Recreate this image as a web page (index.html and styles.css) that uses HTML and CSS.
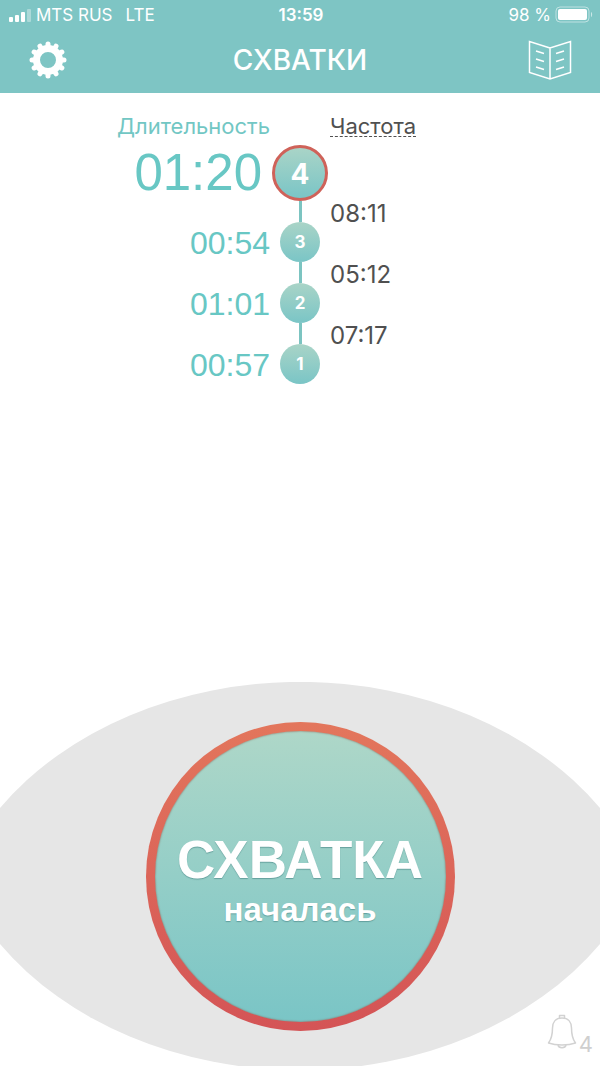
FILE: index.html
```html
<!DOCTYPE html>
<html lang="ru">
<head>
    <meta charset="UTF-8">
    <meta name="viewport" content="width=device-width, initial-scale=1.0">
    <title>Схватки</title>
    <link rel="stylesheet" href="styles.css">
</head>
<body>
    <header class="header">
        <div class="status">
            <div class="status-left">
                <svg class="signal" width="23" height="13" viewBox="0 0 23 13" fill="#fff" aria-hidden="true">
                    <rect x="0" y="8" width="4" height="5" rx="1"/>
                    <rect x="6" y="6" width="4" height="7" rx="1"/>
                    <rect x="12" y="3" width="4" height="10" rx="1"/>
                    <rect x="18" y="0" width="4" height="13" rx="1" opacity="0.35"/>
                </svg>
                <span>MTS RUS</span>
                <span class="network">LTE</span>
            </div>
            <div class="clock">13:59</div>
            <div class="status-right">
                <span>98 %</span>
                <svg width="38" height="18" viewBox="0 0 38 18" aria-hidden="true">
                    <rect x="1" y="1" width="33" height="15" rx="4" fill="none" stroke="#fff" stroke-opacity="0.5"/>
                    <rect x="3" y="3" width="29" height="11" rx="2" fill="#fff"/>
                    <path d="M36 6v5c1.5-.6 1.5-4.400 0-5z" fill="#fff" opacity="0.6"/>
                </svg>
            </div>
        </div>
        <div class="navbar">
            <button class="icon-button" type="button" aria-label="Настройки">
                <svg width="40" height="40" viewBox="-20 -20 40 40" aria-hidden="true">
                    <circle r="11.5" fill="none" stroke="#fff" stroke-width="7"/>
                    <g stroke="#fff" stroke-width="5" stroke-linecap="round">
                        <path d="M0-14v-2M0 14v2M-14 0h-2M14 0h2"/>
                        <path d="M0-14v-2M0 14v2M-14 0h-2M14 0h2" transform="rotate(30)"/>
                        <path d="M0-14v-2M0 14v2M-14 0h-2M14 0h2" transform="rotate(60)"/>
                    </g>
                </svg>
            </button>
            <h1>СХВАТКИ</h1>
            <button class="icon-button" type="button" aria-label="Журнал">
                <svg width="44" height="40" viewBox="0 0 44 40" fill="none" stroke="#fff" stroke-width="1.5" aria-hidden="true">
                    <path d="M22 8L1.5 1.5v31L22 39l20.500-6.500v-31zV39"/>
                    <path d="M8 11l8 2.500M8 19l8 2.500M8 27l8 2.500M36 11l-8 2.500M36 19l-8 2.500M36 27l-8 2.500"/>
                </svg>
            </button>
        </div>
    </header>

    <main class="content">
        <div class="row titles">
            <h2 class="duration-title">Длительность</h2>
            <button class="interval-title" type="button">Частота</button>
        </div>
        <ol class="timeline" reversed>
            <li class="row current">
                <span class="duration">01:20</span>
                <span class="number">4</span>
                <span class="line"></span>
                <span class="interval">08:11</span>
            </li>
            <li class="row">
                <span class="duration">00:54</span>
                <span class="number">3</span>
                <span class="line"></span>
                <span class="interval">05:12</span>
            </li>
            <li class="row">
                <span class="duration">01:01</span>
                <span class="number">2</span>
                <span class="line"></span>
                <span class="interval">07:17</span>
            </li>
            <li class="row">
                <span class="duration">00:57</span>
                <span class="number">1</span>
            </li>
        </ol>
    </main>

    <footer class="stage">
        <svg class="eye" viewBox="0 0 600 384" preserveAspectRatio="none" aria-hidden="true">
            <path d="M0 126A360 282 0 0 1 600 126V262A360 282 0 0 1 0 262z" fill="#e6e6e6"/>
        </svg>
        <button class="start-button" type="button">
            <span class="start-title">СХВАТКА</span>
            <span class="start-text">началась</span>
        </button>
        <button class="reminder" type="button" aria-label="Напоминания: 4">
            <svg width="30" height="36" viewBox="0 0 30 36" fill="none" stroke="#d2d2d2" stroke-width="1.5" stroke-linejoin="round" aria-hidden="true">
                <path d="M12.5 4V1.500h5V4"/>
                <path d="M15 4C8.500 4 5.500 8.500 5.500 14C5.500 22 4.500 25 1.500 29C9 31.500 21 31.500 28.500 29C25.500 25 24.500 22 24.500 14C24.500 8.500 21.500 4 15 4z"/>
                <path d="M11 31c.8 3.500 7.200 3.500 8 0"/>
            </svg>
            <span>4</span>
        </button>
    </footer>
</body>
</html>
```

FILE: styles.css
```css
* {
    box-sizing: border-box;
}
body {
    display: flex;
    flex-direction: column;
    min-height: 100vh;
    margin: 0;
    background-color: #fff;
    color: #505050;
    font-family: Inter, "Noto Sans", sans-serif;
}
button {
    padding: 0;
    border: none;
    background: none;
    color: inherit;
    font-family: inherit;
    cursor: pointer;
}
svg {
    display: block;
}

/* Header */
.header {
    background-color: #7ec5c4;
    color: #fff;
}
.status {
    display: grid;
    grid-template-columns: 1fr auto 1fr;
    align-items: center;
    height: 30px;
    padding: 0 7px 0 9px;
    font-size: 17px;
}
.status-left,
.status-right {
    display: flex;
    align-items: center;
    gap: 4px;
}
.status-right {
    justify-content: flex-end;
}
.network {
    margin-left: 9px;
}
.clock {
    font-weight: 600;
}
.navbar {
    display: grid;
    grid-template-columns: 1fr auto 1fr;
    align-items: center;
    height: 63px;
    padding: 0 28px 3px;
}
.navbar h1 {
    margin: 0;
    font-size: 28px;
    font-weight: 500;
}
.icon-button {
    justify-self: start;
}
.icon-button:last-child {
    justify-self: end;
}

/* Timeline */
.content {
    flex: 1;
    padding-top: 20px;
}
.row {
    display: grid;
    grid-template-columns: 1fr 56px 1fr;
    column-gap: 2px;
    align-items: center;
}
.titles {
    height: 32px;
    align-items: start;
    font-size: 22px;
}
.duration-title {
    margin: 0;
    color: #72c7c4;
    font-size: 22px;
    font-weight: 400;
    line-height: 26px;
    text-align: right;
}
.interval-title {
    grid-column: 3;
    justify-self: start;
    height: 24px;
    border-bottom: 1px dashed #505050;
    font-size: 22px;
    line-height: 26px;
}
.timeline {
    margin: 0;
    padding: 0;
    list-style: none;
}
.duration {
    color: #68c7c4;
    font-family: "Liberation Sans", Arial, sans-serif;
    font-size: 32px;
    line-height: 42px;
    height: 40px;
    text-align: right;
}
.number {
    justify-self: center;
    width: 40px;
    height: 40px;
    border-radius: 50%;
    background: linear-gradient(#a9d4c7, #7ac5c6);
    color: #fff;
    font-size: 17px;
    font-weight: 700;
    line-height: 40px;
    text-align: center;
}
.line {
    grid-column: 2;
    justify-self: center;
    width: 3px;
    height: 21px;
    background-color: #7cc4c1;
}
.interval {
    grid-column: 3;
    align-self: start;
    height: 21px;
    font-size: 24px;
    line-height: 26px;
}
.current .duration {
    height: 56px;
    padding-right: 8px;
    font-size: 51px;
    line-height: 56px;
}
.current .number {
    width: 56px;
    height: 56px;
    border: 3px solid #cf6259;
    font-size: 28px;
    line-height: 52px;
}

/* Start button */
.stage {
    position: relative;
    display: grid;
    justify-items: center;
    padding: 40px 0 35px;
    overflow: hidden;
}
.eye {
    position: absolute;
    top: 0;
    left: 0;
    width: 100%;
    height: 100%;
}
.start-button {
    position: relative;
    display: flex;
    flex-direction: column;
    align-items: center;
    justify-content: center;
    width: 309px;
    height: 309px;
    padding-top: 10px;
    border: 9px solid transparent;
    border-radius: 50%;
    background: linear-gradient(#aed7c8, #7ac5c6) padding-box, linear-gradient(#e3765c, #d45456) border-box;
    box-shadow: inset 0 0 2px #8a6a5c;
    color: #fff;
    font-family: "Liberation Sans", Arial, sans-serif;
    font-weight: 700;
    text-shadow: 0 1px 1px rgba(70, 130, 130, 0.6);
}
.start-title {
    font-size: 53px;
    line-height: 56px;
}
.start-text {
    font-size: 33px;
    line-height: 44px;
}
.reminder {
    position: absolute;
    right: 7px;
    bottom: 10px;
    display: flex;
    align-items: flex-end;
    gap: 2px;
    color: #cfcfcf;
    font-size: 22px;
    line-height: 24px;
}
.reminder svg {
    margin-bottom: 6px;
}
```
